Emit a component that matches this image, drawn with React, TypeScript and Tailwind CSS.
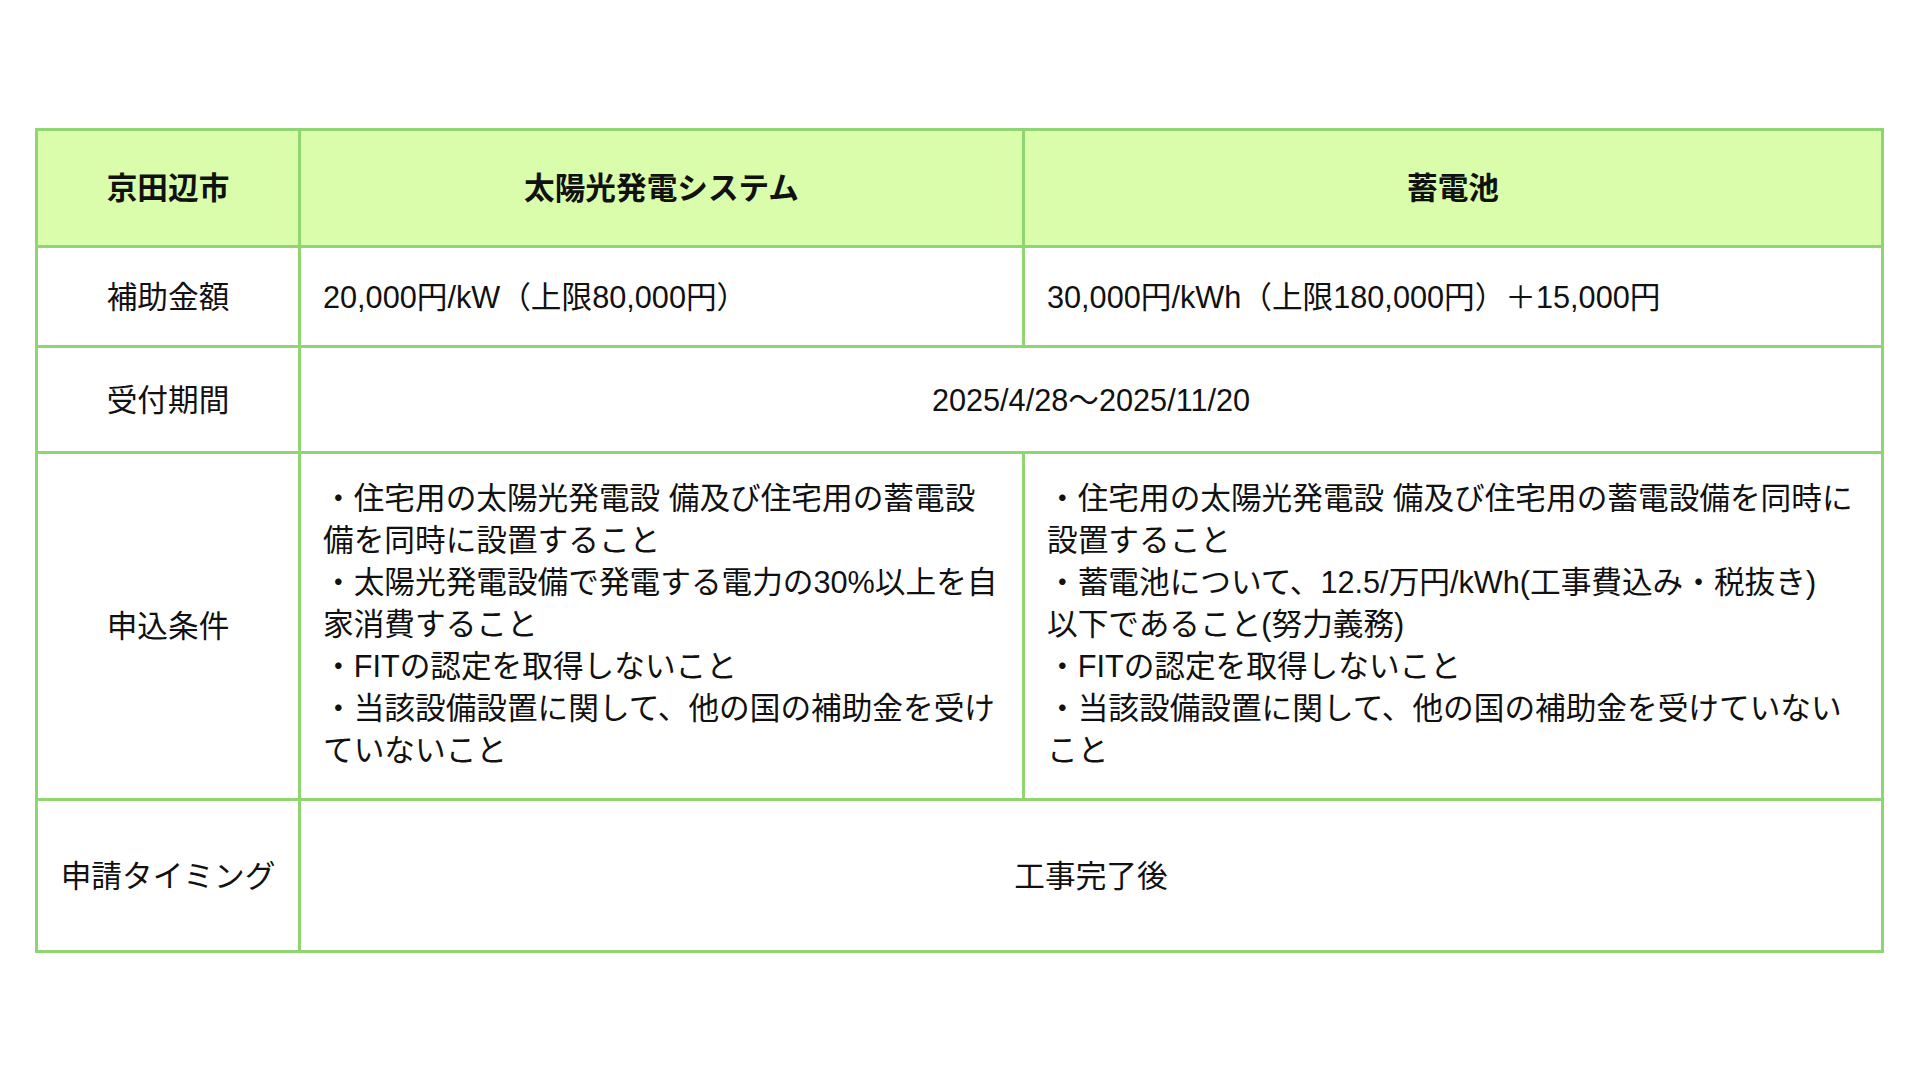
const solarConditions = [
  "・住宅用の太陽光発電設 備及び住宅用の蓄電設",
  "備を同時に設置すること",
  "・太陽光発電設備で発電する電力の30%以上を自",
  "家消費すること",
  "・FITの認定を取得しないこと",
  "・当該設備設置に関して、他の国の補助金を受け",
  "ていないこと",
]

const batteryConditions = [
  "・住宅用の太陽光発電設 備及び住宅用の蓄電設備を同時に",
  "設置すること",
  "・蓄電池について、12.5/万円/kWh(工事費込み・税抜き)",
  "以下であること(努力義務)",
  "・FITの認定を取得しないこと",
  "・当該設備設置に関して、他の国の補助金を受けていない",
  "こと",
]

const cell = "border-[3px] border-[#8fd672]"

function Lines({ lines }: { lines: string[] }) {
  return (
    <>
      {lines.map((l) => (
        <div key={l} className="whitespace-nowrap">{l}</div>
      ))}
    </>
  )
}

export default function App() {
  return (
    <div
      className="w-[1920px] h-[1080px] bg-white pt-[128px] pl-[35px] text-[#111] text-[30.67px] leading-[42px]"
      style={{ fontFamily: '"Liberation Sans", "Noto Sans CJK JP", sans-serif' }}
    >
      <table className="border-collapse table-fixed w-[1849px]">
        <colgroup>
          <col className="w-[263px]" />
          <col className="w-[724px]" />
          <col className="w-[859px]" />
        </colgroup>
        <tbody>
          <tr className="h-[117px] bg-[#d9fdab] font-bold">
            <td className={`${cell} text-center`}>京田辺市</td>
            <td className={`${cell} text-center`}>太陽光発電システム</td>
            <td className={`${cell} text-center`}>蓄電池</td>
          </tr>
          <tr className="h-[100px]">
            <td className={`${cell} text-center`}>補助金額</td>
            <td className={`${cell} px-[22px]`}>20,000円/kW（上限80,000円）</td>
            <td className={`${cell} px-[22px]`}>30,000円/kWh（上限180,000円）＋15,000円</td>
          </tr>
          <tr className="h-[106px]">
            <td className={`${cell} text-center`}>受付期間</td>
            <td colSpan={2} className={`${cell} text-center`}>2025/4/28〜2025/11/20</td>
          </tr>
          <tr>
            <td className={`${cell} text-center`}>申込条件</td>
            <td className={`${cell} px-[22px] pt-[23px] pb-[27px] align-top`}>
              <Lines lines={solarConditions} />
            </td>
            <td className={`${cell} px-[22px] pt-[23px] pb-[27px] align-top`}>
              <Lines lines={batteryConditions} />
            </td>
          </tr>
          <tr className="h-[152px]">
            <td className={`${cell} text-center`}>申請タイミング</td>
            <td colSpan={2} className={`${cell} text-center`}>工事完了後</td>
          </tr>
        </tbody>
      </table>
    </div>
  )
}
